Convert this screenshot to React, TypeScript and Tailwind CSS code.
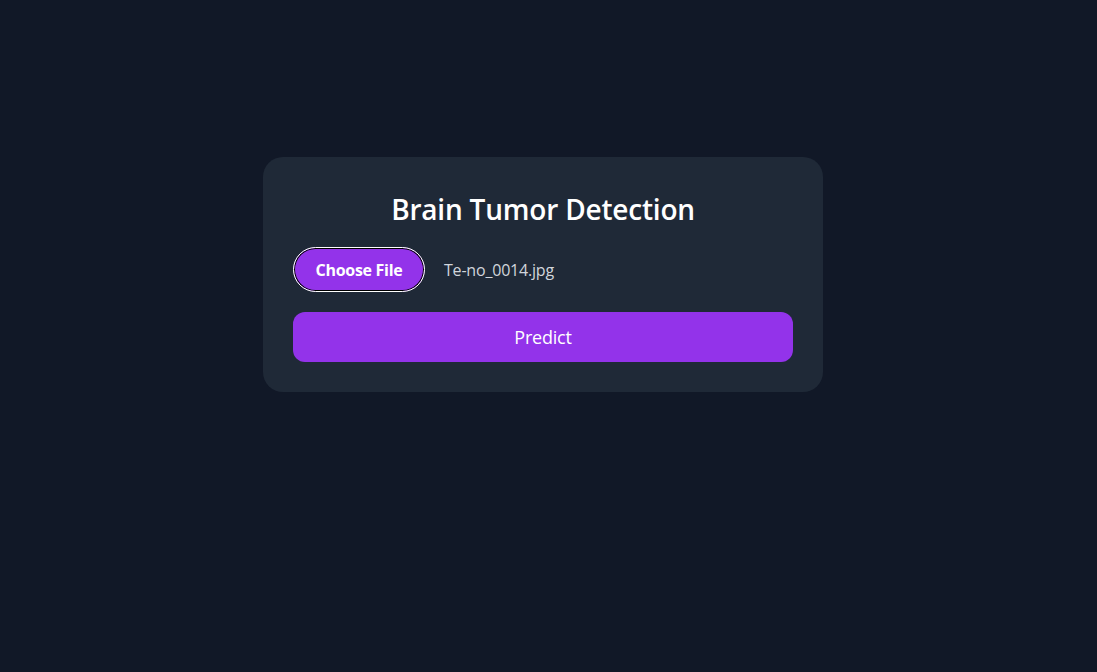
import React from 'react';

const App: React.FC = () => {
  return (
    <div className="min-h-screen w-full bg-[#111827] text-white font-['Open_Sans',sans-serif] flex justify-center pt-[157px] pr-[11px]">
      <div className="w-[560px] h-fit bg-[#1f2937] rounded-[20px] p-[30px] flex flex-col">
        <h1 className="text-[28px] leading-[36px] font-semibold text-center mt-[4px] tracking-[-0.2px]">Brain Tumor Detection</h1>
        <div className="flex items-center mt-[20px]">
          <button className="h-[45px] w-[132px] shrink-0 rounded-full bg-[#9333ea] border border-white shadow-[inset_0_0_0_1px_#000] text-[16px] font-bold tracking-[-0.3px]">
            Choose File
          </button>
          <span className="ml-[19px] text-[16px] text-[#d1d5db] tracking-[-0.2px]">Te-no_0014.jpg</span>
        </div>
        <button className="mt-[20px] h-[50px] shrink-0 w-full rounded-xl bg-[#9333ea] text-[18px] tracking-[-0.2px]">
          Predict
        </button>
      </div>
    </div>
  );
};

export default App;
